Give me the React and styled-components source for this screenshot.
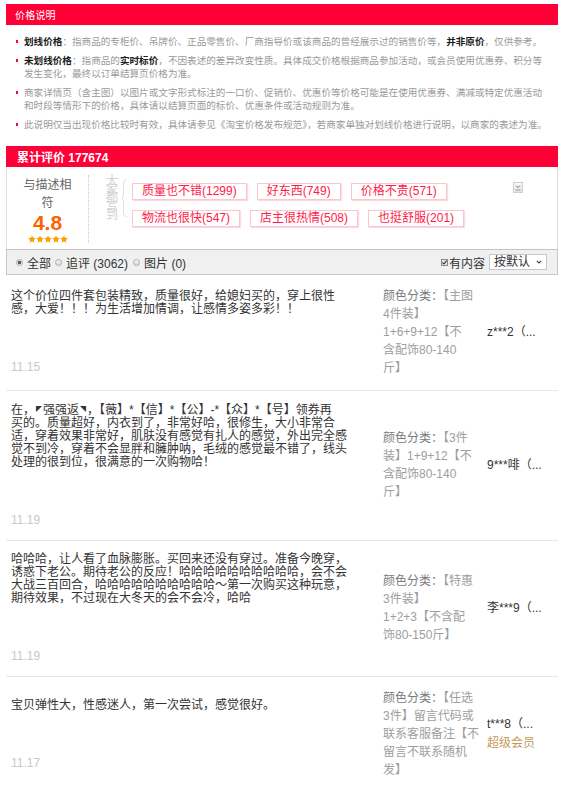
import React from 'react';
import styled, { createGlobalStyle } from 'styled-components';

const GlobalStyle = createGlobalStyle`
  html { overflow: hidden; }
  html, body { margin: 0; padding: 0; background: #fff; }
  body {
    font-family: "Liberation Sans", "Noto Sans CJK SC", sans-serif;
    color: #333;
  }
  * { box-sizing: border-box; }
`;

const Page = styled.div`
  padding: 4px 6px 0;
`;

const RedBar = styled.div`
  height: 21px;
  background: #ff0036;
  color: #fff;
  display: flex;
  align-items: center;
  font-size: ${(p) => p.$size}px;
  font-weight: ${(p) => (p.$bold ? 700 : 400)};
  padding-left: ${(p) => p.$pl}px;
  letter-spacing: ${(p) => (p.$bold ? '0' : '0.2px')};
`;

const Notes = styled.div`
  display: flex;
  flex-direction: column;
  gap: 6px;
  padding: 10px 0 0 10px;
  margin-bottom: 15px;
`;

const Note = styled.div`
  display: flex;
  align-items: flex-start;
  font-size: 9.6px;
  line-height: 13px;
  color: #9a9a9a;
  white-space: nowrap;
`;

const Bullet = styled.span`
  flex: none;
  width: 2px;
  height: 3px;
  margin: 5px 6px 0 0;
  background: #ff0036;
`;

const Strong = styled.b`
  color: #1a1a1a;
  font-weight: 700;
`;

const Summary = styled.div`
  display: flex;
  height: 82px;
  border-left: 1px solid #e0e0e0;
  border-right: 1px solid #e0e0e0;
`;

const Score = styled.div`
  width: 81px;
  flex: none;
  padding-top: 9px;
  text-align: center;
`;

const ScoreLabel = styled.div`
  width: 56px;
  margin: 0 auto;
  font-size: 12px;
  line-height: 18px;
  color: #666;
`;

const ScoreValue = styled.div`
  font-size: 21px;
  line-height: 22px;
  font-weight: 700;
  color: #ff6000;
`;

const Stars = styled.div`
  display: flex;
  justify-content: center;
  margin-top: 1px;
  height: 9px;
`;

const Divider = styled.div`
  width: 0;
  margin: 8px 0 6px;
  border-left: 1px dotted #c8c8c8;
`;

const TagArea = styled.div`
  flex: 1;
  display: flex;
  align-items: flex-start;
  padding-top: 10px;
`;

const VerticalLabel = styled.span`
  flex: none;
  width: 12px;
  margin-left: 17px;
  font-size: 12px;
  line-height: 8.5px;
  color: #d2d2d2;
  word-break: break-all;
`;

const Brace = styled.svg`
  flex: none;
  margin: 2px 0 0 3px;
`;

const TagList = styled.div`
  flex: 1;
  display: flex;
  flex-wrap: wrap;
  row-gap: 10px;
  column-gap: 10px;
  margin: 6px 0 0 5px;
`;

const Tag = styled.span`
  height: 17px;
  padding: 0 9px;
  border: 1px solid #f9c7d0;
  box-shadow: 1px 1px 1px rgba(220, 0, 50, 0.14);
  font-size: 12px;
  line-height: 15px;
  color: #ff1a48;
  background: #fff;
  white-space: nowrap;
`;

const Toggle = styled.span`
  flex: none;
  width: 10px;
  height: 11px;
  margin: 5px 34px 0 9px;
  border: 1px solid #cfcfcf;
  background: linear-gradient(#fafafa, #e2e2e2);
  display: flex;
  align-items: center;
  justify-content: center;
`;

const FilterBar = styled.div`
  height: 26px;
  display: flex;
  align-items: center;
  padding: 0 10px 0 9px;
  background: #f0f0f0;
  border: 1px solid #c9c9c9;
  border-top-color: #c4c4c4;
  font-size: 12px;
  color: #333;
`;

const RadioItem = styled.label`
  display: flex;
  align-items: center;
  margin-right: ${(p) => p.$mr}px;
  white-space: nowrap;
`;

const Radio = styled.span`
  flex: none;
  width: 7px;
  height: 7px;
  margin-right: 4px;
  border-radius: 50%;
  border: 1px solid #adadad;
  background: ${(p) =>
    p.$on
      ? 'radial-gradient(circle, #5a5a5a 0 1.4px, #e4e4e4 1.8px)'
      : 'linear-gradient(#f4f4f4, #d9d9d9)'};
`;

const RightGroup = styled.div`
  margin-left: auto;
  display: flex;
  align-items: center;
`;

const Check = styled.svg`
  flex: none;
  margin-right: 1px;
`;

const Select = styled.span`
  display: flex;
  align-items: center;
  width: 58px;
  height: 16px;
  margin-left: 4px;
  padding-left: 4px;
  border: 1px solid #c8c8c8;
  background: #fff;
  line-height: 14px;
  white-space: nowrap;
`;

const Chevron = styled.svg`
  margin-left: 6px;
`;

const Row = styled.div`
  display: grid;
  grid-template-columns: 372px 104px 1fr;
  align-items: center;
  padding: 12px 0 13px 5px;
  border-bottom: 1px solid #e6e6e6;
`;

const ReviewText = styled.div`
  font-size: 12px;
  line-height: 13px;
  color: #333;
  white-space: pre;
`;

const Mark = styled.span`
  font-size: 6px;
  vertical-align: 3px;
  margin: 0 1px;
`;

const ReviewDate = styled.div`
  margin-top: 45px;
  font-size: 12px;
  line-height: 13px;
  color: #c8c8c8;
`;

const Sku = styled.div`
  font-size: 12px;
  line-height: 18px;
  color: #9e9e9e;
  white-space: nowrap;
`;

const SkuLine = styled.div``;

const SkuLabel = styled.span`
  color: #7a7a7a;
`;

const User = styled.div`
  font-size: 12px;
  line-height: 19px;
  color: #333;
  white-space: nowrap;
`;

const Vip = styled.div`
  color: #c49a5c;
`;

const StarRow = () => (
  <Stars>
    {[0, 1, 2, 3, 4].map((i) => (
      <svg key={i} width="8" height="8" viewBox="0 0 8 8">
        <polygon
          points="4,0.3 5.1,2.8 7.9,3 5.8,4.9 6.4,7.7 4,6.2 1.6,7.7 2.2,4.9 0.1,3 2.9,2.8"
          fill="#fa9d00"
        />
      </svg>
    ))}
  </Stars>
);

const tags = [
  '质量也不错(1299)',
  '好东西(749)',
  '价格不贵(571)',
  '物流也很快(547)',
  '店主很热情(508)',
  '也挺舒服(201)',
];

const reviews = [
  {
    text: '这个价位四件套包装精致，质量很好，给媳妇买的，穿上很性\n感，大爱！！！为生活增加情调，让感情多姿多彩！！',
    date: '11.15',
    sku: ['【主图', '4件装】', '1+6+9+12【不', '含配饰80-140', '斤】'],
    user: 'z***2（...',
  },
  {
    text: (
      <>
        在，<Mark>◤</Mark>强强返<Mark>◥</Mark>，【薇】*【信】*【公】-*【众】*【号】领券再{'\n'}
        买的。质量超好，内衣到了，非常好哈，很修生，大小非常合{'\n'}
        适，穿着效果非常好，肌肤没有感觉有扎人的感觉，外出完全感{'\n'}
        觉不到冷，穿着不会显胖和臃肿呐，毛绒的感觉最不错了，线头{'\n'}
        处理的很到位，很满意的一次购物哈！
      </>
    ),
    date: '11.19',
    sku: ['【3件', '装】1+9+12【不', '含配饰80-140', '斤】'],
    user: '9***啡（...',
  },
  {
    text: '哈哈哈，让人看了血脉膨胀。买回来还没有穿过。准备今晚穿，\n诱惑下老公。期待老公的反应！哈哈哈哈哈哈哈哈哈哈，会不会\n大战三百回合，哈哈哈哈哈哈哈哈哈哈～第一次购买这种玩意，\n期待效果，不过现在大冬天的会不会冷，哈哈',
    date: '11.19',
    sku: ['【特惠', '3件装】', '1+2+3【不含配', '饰80-150斤】'],
    user: '李***9（...',
  },
  {
    text: '宝贝弹性大，性感迷人，第一次尝试，感觉很好。',
    date: '11.17',
    sku: ['【任选', '3件】留言代码或', '联系客服备注【不', '留言不联系随机', '发】'],
    user: 't***8（...',
    vip: '超级会员',
  },
];

export default function App() {
  return (
    <>
      <GlobalStyle />
      <Page>
        <RedBar $size={10} $pl={9}>价格说明</RedBar>
        <Notes>
          <Note>
            <Bullet />
            <span>
              <Strong>划线价格</Strong>：指商品的专柜价、吊牌价、正品零售价、厂商指导价或该商品的曾经展示过的销售价等，
              <Strong>并非原价</Strong>，仅供参考。
            </span>
          </Note>
          <Note>
            <Bullet />
            <span>
              <Strong>未划线价格</Strong>：指商品的<Strong>实时标价</Strong>，不因表述的差异改变性质。具体成交价格根据商品参加活动，或会员使用优惠券、积分等
              <br />
              发生变化，最终以订单结算页价格为准。
            </span>
          </Note>
          <Note>
            <Bullet />
            <span>
              商家详情页（含主图）以图片或文字形式标注的一口价、促销价、优惠价等价格可能是在使用优惠券、满减或特定优惠活动
              <br />
              和时段等情形下的价格，具体请以结算页面的标价、优惠条件或活动规则为准。
            </span>
          </Note>
          <Note>
            <Bullet />
            <span>
              此说明仅当出现价格比较时有效，具体请参见《淘宝价格发布规范》，若商家单独对划线价格进行说明，以商家的表述为准。
            </span>
          </Note>
        </Notes>

        <RedBar $size={12} $pl={11} $bold>
          累计评价 177674
        </RedBar>
        <Summary>
          <Score>
            <ScoreLabel>与描述相符</ScoreLabel>
            <ScoreValue>4.8</ScoreValue>
            <StarRow />
          </Score>
          <Divider />
          <TagArea>
            <VerticalLabel>大家都写到</VerticalLabel>
            <Brace width="6" height="38" viewBox="0 0 6 38">
              <path
                d="M6 0.5 Q2.5 0.5 2.5 5 V15 Q2.5 19 0.5 19 Q2.5 19 2.5 23 V33 Q2.5 37.5 6 37.5"
                fill="none"
                stroke="#dedede"
                strokeWidth="1"
              />
            </Brace>
            <TagList>
              {tags.map((t) => (
                <Tag key={t}>{t}</Tag>
              ))}
            </TagList>
            <Toggle>
              <svg width="6" height="7" viewBox="0 0 6 7">
                <path d="M1 1.5 L3 3.5 L5 1.5" fill="none" stroke="#777" strokeWidth="1" />
                <path d="M0.5 6 H5.5" stroke="#999" strokeWidth="1" />
              </svg>
            </Toggle>
          </TagArea>
        </Summary>

        <FilterBar>
          <RadioItem $mr={4}>
            <Radio $on />
            全部
          </RadioItem>
          <RadioItem $mr={5}>
            <Radio />
            追评 (3062)
          </RadioItem>
          <RadioItem $mr={0}>
            <Radio />
            图片 (0)
          </RadioItem>
          <RightGroup>
            <Check width="7" height="7" viewBox="0 0 7 7">
              <rect x="0.5" y="0.5" width="6" height="6" fill="#e6e6e6" stroke="#8a8a8a" />
              <path d="M1.5 3.5 L3 5 L5.7 1.6" fill="none" stroke="#333" strokeWidth="1.1" />
            </Check>
            有内容
            <Select>
              按默认
              <Chevron width="6" height="4" viewBox="0 0 6 4">
                <path d="M0.8 0.8 L3 3 L5.2 0.8" fill="none" stroke="#444" strokeWidth="1.1" />
              </Chevron>
            </Select>
          </RightGroup>
        </FilterBar>

        {reviews.map((r, i) => (
          <Row key={i}>
            <div>
              <ReviewText>{r.text}</ReviewText>
              <ReviewDate>{r.date}</ReviewDate>
            </div>
            <Sku>
              {r.sku.map((line, j) => (
                <SkuLine key={j}>
                  {j === 0 && <SkuLabel>颜色分类：</SkuLabel>}
                  {line}
                </SkuLine>
              ))}
            </Sku>
            <User>
              <div>{r.user}</div>
              {r.vip && <Vip>{r.vip}</Vip>}
            </User>
          </Row>
        ))}
      </Page>
    </>
  );
}
